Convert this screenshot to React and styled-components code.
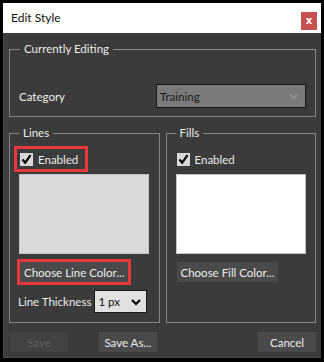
import React from "react";
import styled, { createGlobalStyle } from "styled-components";

const Global = createGlobalStyle`
  html, body { margin: 0; padding: 0; background: #000; }
  body { font-family: "Segoe UI", Lato, "Noto Sans", sans-serif; font-size: 11px; }
  * { box-sizing: border-box; }
`;

const Page = styled.div`
  width: 324px;
  height: 362px;
  padding: 3px 3px 4px 3px;
  background: #000;
`;

const Dialog = styled.div`
  width: 318px;
  height: 355px;
  display: flex;
  flex-direction: column;
  background: #3b3b3b;
  border-left: 1px solid #4a4a4a;
  border-bottom: 1px solid #4a4a4a;
`;

const TitleBar = styled.div`
  height: 30px;
  flex: none;
  background: #fff;
  display: flex;
  align-items: center;
  justify-content: space-between;
  padding: 0 4px 0 8px;
  margin-left: -1px;
`;

const Title = styled.div`
  font-size: 12px;
  color: #111;
  padding-bottom: 2px;
`;

const CloseButton = styled.button`
  width: 16px;
  height: 18px;
  margin-top: 6px;
  border: none;
  padding: 0;
  background: #c75050;
  color: #fff;
  font-family: "DejaVu Sans", sans-serif;
  font-size: 10px;
  font-weight: bold;
  line-height: 18px;
  display: flex;
  align-items: center;
  justify-content: center;
`;

const Body = styled.div`
  flex: 1;
  display: flex;
  flex-direction: column;
  padding: 0 5px 0 5px;
`;

const Group = styled.fieldset`
  margin: ${(p) => p.$mt || 0}px 0 0 0;
  padding: ${(p) => p.$pad || "0 5px"};
  border: 1px solid #858585;
  min-width: 0;
  display: flex;
  flex-direction: column;
  flex: ${(p) => (p.$grow ? 1 : "none")};
`;

const Legend = styled.legend`
  color: #ececec;
  padding: 0 4px;
  margin-left: 5px;
  line-height: 16px;
  font-size: 11.5px;
`;

const CategoryRow = styled.div`
  display: flex;
  align-items: center;
  justify-content: space-between;
  margin-top: 27px;
  padding: 0 4px 0 4px;
`;

const Label = styled.span`
  color: #ececec;
  font-size: 11.5px;
  white-space: nowrap;
`;

const DarkSelect = styled.div`
  width: 150px;
  height: 24px;
  background: #7a7a7a;
  border: 1px solid #161616;
  display: flex;
  align-items: center;
  justify-content: space-between;
  padding: 0 6px 0 3px;
  color: #1c1c1c;
  font-size: 11.5px;
`;

const Columns = styled.div`
  display: flex;
  gap: 6px;
  margin-top: 8px;
  height: 198px;
`;

const CheckRow = styled.div`
  display: flex;
  align-items: center;
  gap: 5px;
  width: 74px;
  height: 26px;
  margin-top: 5px;
  padding-left: 3px;
  border: 3px solid ${(p) => (p.$hl ? "#e5393d" : "transparent")};
  color: #ececec;
  font-size: 11.5px;
`;

const Box = styled.span`
  width: 13px;
  height: 13px;
  background: #d9d9d9;
  display: flex;
  align-items: center;
  justify-content: center;
`;

const Swatch = styled.div`
  margin: 2px 0 0 5px;
  width: 130px;
  height: 80px;
  background: ${(p) => p.$color};
  border: 1px solid #c4c4c4;
`;

const ColorButton = styled.button`
  align-self: flex-start;
  margin: 8px 0 0 6px;
  height: 20px;
  padding: 0 4px;
  border: none;
  background: #4a4a4a;
  color: #ececec;
  font-family: inherit;
  font-size: 11.5px;
  white-space: nowrap;
  outline: ${(p) => (p.$hl ? "3px solid #e5393d" : "none")};
  outline-offset: 0;
`;

const ThicknessRow = styled.div`
  display: flex;
  align-items: center;
  gap: 3px;
  margin: 8px 0 0 4px;
`;

const LightSelect = styled.div`
  width: 53px;
  height: 23px;
  flex: none;
  background: #e1e1e1;
  border: 1px solid #1a1a1a;
  display: flex;
  align-items: center;
  justify-content: space-between;
  padding: 0 5px 0 3px;
  color: #111;
  font-size: 11.5px;
`;

const Footer = styled.div`
  display: flex;
  align-items: center;
  margin-top: 9px;
  padding: 0 0 0 1px;
`;

const FooterButton = styled.button`
  width: 58px;
  height: 20px;
  border: none;
  background: ${(p) => (p.disabled ? "#424242" : "#4a4a4a")};
  color: ${(p) => (p.disabled ? "#5e5e5e" : "#ececec")};
  font-family: inherit;
  font-size: 11.5px;
  padding: 0;
  margin-left: ${(p) => p.$ml || 0}px;
`;

const Spacer = styled.div`
  flex: 1;
`;

const Check = () => (
  <svg width="11" height="11" viewBox="0 0 11 11">
    <path d="M1.5 5.5 L4.2 8.8 L9.5 1.2" fill="none" stroke="#000" strokeWidth="2.2" />
  </svg>
);

const Chevron = ({ color }) => (
  <svg width="10" height="8" viewBox="0 0 10 8">
    <path d="M1 2 L5 6 L9 2" fill="none" stroke={color} strokeWidth="2.2" />
  </svg>
);

export default function App() {
  return (
    <Page>
      <Global />
      <Dialog>
        <TitleBar>
          <Title>Edit Style</Title>
          <CloseButton>x</CloseButton>
        </TitleBar>
        <Body>
          <Group $mt={8} $pad="0 5px 8px 5px">
            <Legend>Currently Editing</Legend>
            <CategoryRow>
              <Label>Category</Label>
              <DarkSelect>
                <span>Training</span>
                <Chevron color="#8d8d8d" />
              </DarkSelect>
            </CategoryRow>
          </Group>
          <Columns>
            <Group $grow $pad="0 4px">
              <Legend>Lines</Legend>
              <CheckRow $hl>
                <Box><Check /></Box>
                <span>Enabled</span>
              </CheckRow>
              <Swatch $color="#d9d9d9" />
              <ColorButton $hl>Choose Line Color...</ColorButton>
              <ThicknessRow>
                <Label>Line Thickness</Label>
                <LightSelect>
                  <span>1 px</span>
                  <Chevron color="#000" />
                </LightSelect>
              </ThicknessRow>
            </Group>
            <Group $grow $pad="0 4px">
              <Legend>Fills</Legend>
              <CheckRow>
                <Box><Check /></Box>
                <span>Enabled</span>
              </CheckRow>
              <Swatch $color="#ffffff" />
              <ColorButton>Choose Fill Color...</ColorButton>
            </Group>
          </Columns>
          <Footer>
            <FooterButton disabled>Save</FooterButton>
            <FooterButton $ml={31}>Save As...</FooterButton>
            <Spacer />
            <FooterButton>Cancel</FooterButton>
          </Footer>
        </Body>
      </Dialog>
    </Page>
  );
}
